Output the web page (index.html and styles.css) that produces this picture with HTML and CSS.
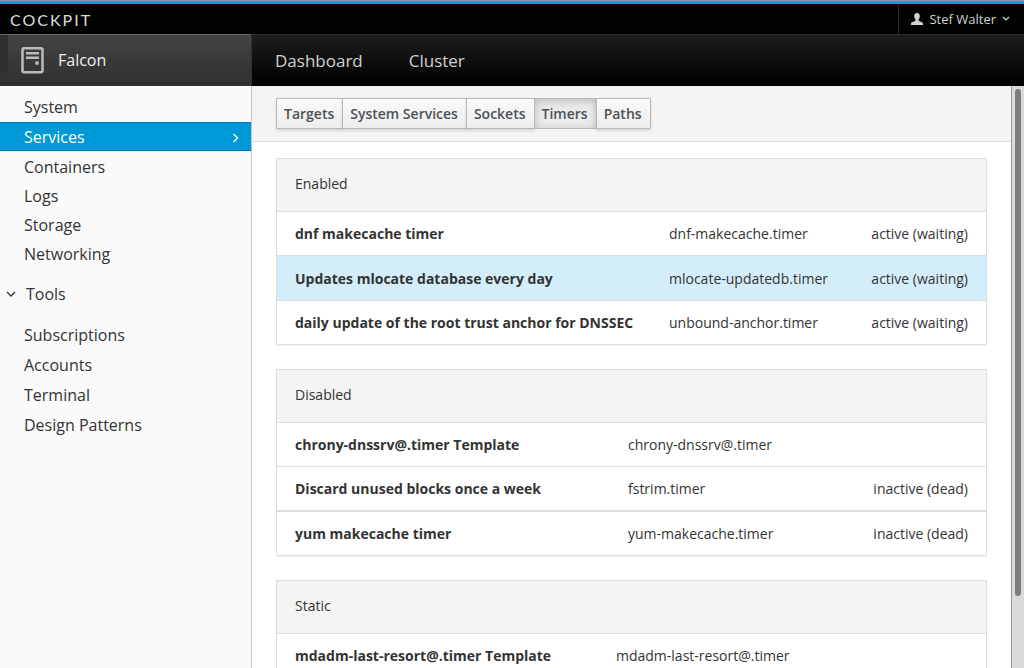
FILE: index.html
```html
<!DOCTYPE html>
<html lang="en">
<head>
<meta charset="utf-8">
<title>Cockpit - Services</title>
<link rel="stylesheet" href="styles.css">
</head>
<body>
<header class="topbar">
  <a class="brand" href="#">COCKPIT</a>
  <button class="user" type="button">
    <svg width="12" height="12" viewBox="0 0 12 12" aria-hidden="true"><path fill="#d1d1d1" d="M6 0C4.300 0 3.200 1.100 3.200 2.900c0 1.600.5 2.700 1.300 3.500v1.200C4.300 8.600 0 8.600 0 11v1h12v-1c0-2.400-4.300-2.400-4.500-3.400V6.400c.8-.8 1.300-1.900 1.300-3.500C8.800 1.100 7.700 0 6 0z"/></svg>
    <span>Stef Walter</span>
    <svg width="8" height="6" viewBox="0 0 8 6" aria-hidden="true"><path d="M1 1l3 3 3-3" fill="none" stroke="#d1d1d1" stroke-width="1.200"/></svg>
  </button>
</header>
<div class="navbar">
  <a class="machine" href="#">
    <svg width="23" height="27" viewBox="0 0 23 27" aria-hidden="true"><rect x="1.500" y="1.250" width="20" height="24" rx="1.500" fill="none" stroke="#bcbcbc" stroke-width="2.500"/><path d="M5 6.250h13M5 10.750h13" stroke="#bcbcbc" stroke-width="2.600"/><circle cx="16" cy="16" r="1.900" fill="#bcbcbc"/></svg>
    <span>Falcon</span>
  </a>
  <nav class="mainnav">
    <a href="#">Dashboard</a>
    <a href="#">Cluster</a>
  </nav>
</div>
<div class="body">
  <nav class="sidebar">
    <ul class="menu">
      <li><a href="#">System</a></li>
      <li class="selected"><a href="#">Services<svg width="7" height="10" viewBox="0 0 7 10" aria-hidden="true"><path d="M1.500 1l4 4-4 4" fill="none" stroke="#fff" stroke-width="1.400"/></svg></a></li>
      <li><a href="#">Containers</a></li>
      <li><a href="#">Logs</a></li>
      <li><a href="#">Storage</a></li>
      <li><a href="#">Networking</a></li>
    </ul>
    <button class="toggle" type="button"><svg width="10" height="7" viewBox="0 0 10 7" aria-hidden="true"><path d="M1 1l4 4 4-4" fill="none" stroke="#333" stroke-width="1.300"/></svg>Tools</button>
    <ul class="menu tools">
      <li><a href="#">Subscriptions</a></li>
      <li><a href="#">Accounts</a></li>
      <li><a href="#">Terminal</a></li>
      <li><a href="#">Design Patterns</a></li>
    </ul>
  </nav>
  <main class="content">
    <div class="toolbar">
      <div class="btn-group">
        <button type="button">Targets</button>
        <button type="button">System Services</button>
        <button type="button">Sockets</button>
        <button type="button" class="active" aria-pressed="true">Timers</button>
        <button type="button">Paths</button>
      </div>
    </div>
    <div class="panels">
      <section class="panel">
        <h2>Enabled</h2>
        <table>
          <colgroup><col class="name-enabled"><col><col></colgroup>
          <tbody>
            <tr><th scope="row">dnf makecache timer</th><td>dnf-makecache.timer</td><td class="state">active (waiting)</td></tr>
            <tr class="hover"><th scope="row">Updates mlocate database every day</th><td>mlocate-updatedb.timer</td><td class="state">active (waiting)</td></tr>
            <tr><th scope="row">daily update of the root trust anchor for DNSSEC</th><td>unbound-anchor.timer</td><td class="state">active (waiting)</td></tr>
          </tbody>
        </table>
      </section>
      <section class="panel">
        <h2>Disabled</h2>
        <table>
          <colgroup><col class="name-disabled"><col><col></colgroup>
          <tbody>
            <tr><th scope="row">chrony-dnssrv@.timer Template</th><td>chrony-dnssrv@.timer</td><td class="state"></td></tr>
            <tr><th scope="row">Discard unused blocks once a week</th><td>fstrim.timer</td><td class="state">inactive (dead)</td></tr>
            <tr class="divided"><th scope="row">yum makecache timer</th><td>yum-makecache.timer</td><td class="state">inactive (dead)</td></tr>
          </tbody>
        </table>
      </section>
      <section class="panel">
        <h2>Static</h2>
        <table>
          <colgroup><col class="name-static"><col><col></colgroup>
          <tbody>
            <tr><th scope="row">mdadm-last-resort@.timer Template</th><td>mdadm-last-resort@.timer</td><td class="state"></td></tr>
          </tbody>
        </table>
      </section>
    </div>
  </main>
  <div class="scrollbar"><div class="thumb"></div></div>
</div>
</body>
</html>
```

FILE: styles.css
```css
* {
  box-sizing: border-box;
}

body {
  margin: 0;
  height: 100vh;
  display: flex;
  flex-direction: column;
  overflow: hidden;
  font-family: "Open Sans", sans-serif;
  font-size: 14px;
  line-height: 19px;
  color: #333;
  background: #fff;
}

a {
  color: inherit;
  text-decoration: none;
}

button {
  font-family: inherit;
  color: inherit;
  margin: 0;
  cursor: pointer;
}

.topbar {
  flex: none;
  display: flex;
  justify-content: space-between;
  align-items: stretch;
  height: 34px;
  padding-top: 4px;
  background: linear-gradient(#8f999e 0 1px, #159bdc 1px 4px, #020202 4px);
}

.brand {
  padding-left: 10px;
  font-family: Lato, sans-serif;
  font-size: 16px;
  line-height: 32px;
  letter-spacing: 2px;
  color: #dcdcdc;
}

.user {
  display: flex;
  align-items: center;
  gap: 6px;
  padding: 0 14px 0 12px;
  border: 0;
  border-left: 1px solid #2b2b2b;
  background: none;
  font-size: 13px;
  color: #d1d1d1;
}

.navbar {
  flex: none;
  display: flex;
  height: 52px;
  border-top: 1px solid #2c2c2c;
  background: linear-gradient(#1d1d1d, #000);
  color: #d1d1d1;
}

.machine {
  width: 251px;
  display: flex;
  align-items: center;
  gap: 14px;
  padding-left: 21px;
  margin-top: -1px;
  border-top: 1px solid #666;
  background: linear-gradient(#303030, #303030) 0 0 / 8px 38px no-repeat, linear-gradient(#444, #2f2f2f);
  font-size: 16px;
  color: #f0f0f0;
}

.mainnav {
  flex: 1;
  display: flex;
  align-items: center;
  gap: 46px;
  padding-left: 23px;
  border-left: 1px solid #303030;
  font-size: 17px;
}

.body {
  flex: 1;
  min-height: 0;
  display: flex;
}

.sidebar {
  flex: none;
  width: 252px;
  padding-top: 6px;
  border-right: 1px solid #c4c4c4;
  background: #fafafa;
  font-size: 16px;
}

.menu {
  display: flex;
  flex-direction: column;
  margin: 0;
  padding: 0;
  list-style: none;
}

.tools {
  gap: 1px;
}

.menu a {
  display: flex;
  align-items: center;
  justify-content: space-between;
  height: 29px;
  padding: 2px 12px 0 24px;
}

.menu .selected a {
  margin: 1px 0;
  border-top: 1px solid #0076b7;
  border-bottom: 1px solid #0076b7;
  background: #0099d8;
  color: #fff;
}

.toggle {
  display: flex;
  align-items: center;
  gap: 10px;
  width: 100%;
  height: 52px;
  padding: 0 6px;
  border: 0;
  background: none;
  font-size: 16px;
}

.content {
  flex: 1;
  min-width: 0;
  overflow: hidden;
}

.toolbar {
  padding: 12px 24px;
  border-bottom: 1px solid #dcdcdc;
  background: #f4f4f4;
}

.btn-group {
  display: flex;
}

.btn-group button {
  height: 31px;
  padding: 0 8px 0 7px;
  border: 1px solid #b7b7b7;
  background: linear-gradient(#fafafa, #ededed);
  box-shadow: 0 2px 3px rgba(3, 3, 3, 0.12);
  font-size: 14px;
  font-weight: 600;
  color: #4d5258;
}

.btn-group button + button {
  margin-left: -1px;
}

.btn-group button:first-child {
  border-radius: 1px 0 0 1px;
}

.btn-group button:last-child {
  border-radius: 0 1px 1px 0;
}

.btn-group .active {
  background: #ebebeb;
  box-shadow: inset 0 2px 8px rgba(3, 3, 3, 0.2);
}

.panels {
  display: flex;
  flex-direction: column;
  gap: 24px;
  padding: 16px 24px;
}

.panel {
  border: 1px solid #dcdcdc;
  border-radius: 1px;
  box-shadow: 0 1px 1px rgba(0, 0, 0, 0.05);
}

.panel h2 {
  margin: 0;
  padding: 15px 18px 18px;
  background: #f4f4f4;
  font-size: 14px;
  font-weight: 400;
}

.panel table {
  width: 100%;
  table-layout: fixed;
  border-spacing: 0;
}

.panel th,
.panel td {
  padding: 12px 18px;
  border-top: 1px solid #dcdcdc;
  text-align: left;
  white-space: nowrap;
}

.panel .hover > * {
  padding-top: 13px;
  background: #d4edfa;
}

.panel .divided > * {
  border-top-width: 2px;
}

.panel .state {
  text-align: right;
}

.name-enabled {
  width: 374px;
}

.name-disabled {
  width: 333px;
}

.name-static {
  width: 321px;
}

.scrollbar {
  flex: none;
  width: 13px;
  padding: 3px 3px 0;
  border-left: 1px solid #999;
  background: #dadada;
}

.thumb {
  width: 6px;
  height: 87.5%;
  border-radius: 3px;
  background: #7a7f7e;
}
```
